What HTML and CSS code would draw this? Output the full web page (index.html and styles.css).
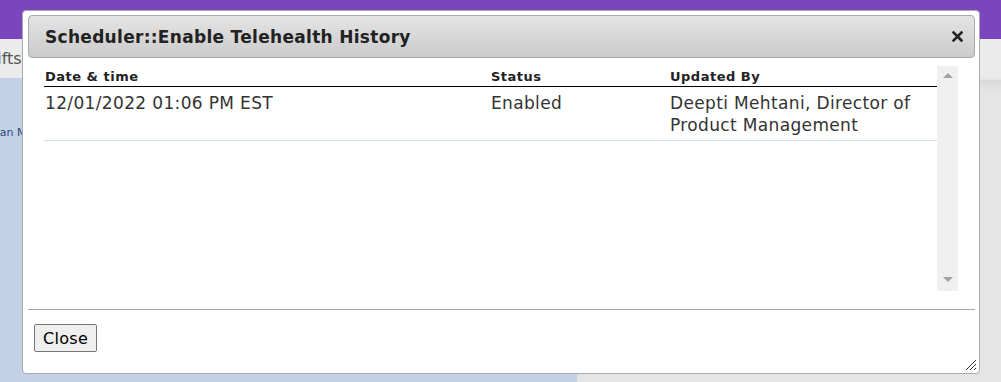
FILE: index.html
```html
<!DOCTYPE html>
<html lang="en">
  <head>
    <meta charset="utf-8" />
    <title>Scheduler</title>
    <link rel="stylesheet" href="styles.css">
  </head>
  <body>
    <div class="topbar"></div>
    <div class="subnav"><span class="subnav-item">Shifts</span></div>
    <div class="main">
      <div class="main-left"><span class="side-link">Plan Ma</span></div>
      <div class="main-right"></div>
    </div>

    <!-- History dialog -->
    <div class="dialog">
      <div class="dialog-title">
        <span class="dialog-title-text">Scheduler::Enable Telehealth History</span>
        <svg class="dialog-close" width="11" height="11" viewBox="0 0 11 11">
          <path d="M1.5 1.5 L9.5 9.5 M9.5 1.5 L1.5 9.5" stroke="#222" stroke-width="2.6" stroke-linecap="square" />
        </svg>
      </div>
      <div class="dialog-body">
        <div class="history">
          <div class="history-row history-head">
            <div class="col-date">Date &amp; time</div>
            <div class="col-status">Status</div>
            <div class="col-user">Updated By</div>
          </div>
          <div class="history-row history-item">
            <div class="col-date">12/01/2022 01:06 PM EST</div>
            <div class="col-status">Enabled</div>
            <div class="col-user">Deepti Mehtani, Director of Product Management</div>
          </div>
        </div>
        <div class="scrollbar">
          <span class="arrow-up"></span>
          <span class="arrow-down"></span>
        </div>
      </div>
      <div class="dialog-footer">
        <button class="btn">Close</button>
      </div>
      <svg class="resize-grip" width="12" height="12" viewBox="0 0 12 12">
        <path d="M11 1 L1 11 M11 5 L5 11 M11 9 L9 11" stroke="#333" stroke-width="1" />
      </svg>
    </div>
  </body>
</html>
```

FILE: styles.css
```css
body {
  margin: 0;
  font-family: "DejaVu Sans", Verdana, sans-serif;
  background: #e5e5e5;
  height: 382px;
  overflow: hidden;
}

.topbar {
  height: 39px;
  background: #7b45be;
}

.subnav {
  height: 39px;
  background: #ebebeb;
  display: flex;
  align-items: center;
}

.subnav-item {
  margin-left: -23px;
  font-size: 16px;
  color: #555;
}

.main {
  display: flex;
  height: 304px;
}

.main-left {
  width: 577px;
  background: #c3d1e6;
  padding-top: 43px;
  box-sizing: border-box;
}

.side-link {
  margin-left: -10px;
  font-size: 11px;
  color: #2b4a7a;
}

.main-right {
  flex: 1;
  background: linear-gradient(#d8d8d8, #e5e5e5 12px);
  margin-top: 2px;
}

/* dialog */
.dialog {
  position: absolute;
  left: 22px;
  top: 10px;
  width: 958px;
  height: 364px;
  box-sizing: border-box;
  padding: 4px 4px 0 5px;
  background: #fff;
  border: 1px solid #aaa;
  border-radius: 4px;
  color: #333;
}

.dialog-title {
  height: 43px;
  box-sizing: border-box;
  display: flex;
  align-items: center;
  justify-content: space-between;
  padding: 0 11px 0 16px;
  border: 1px solid #aaa;
  border-radius: 4px;
  background: linear-gradient(#e4e4e4, #cbcbcb);
}

.dialog-title-text {
  font-size: 17px;
  font-weight: bold;
  letter-spacing: 0.3px;
  color: #222;
}

.dialog-body {
  display: flex;
  height: 225px;
  margin: 8px 17px 0 16px;
}

.history {
  flex: 1;
}

.history-row {
  display: flex;
}

.col-date {
  width: 446px;
}

.col-status {
  width: 179px;
}

.col-user {
  flex: 1;
}

.history-head {
  font-size: 13px;
  font-weight: bold;
  letter-spacing: 0.5px;
  line-height: 15px;
  padding: 3px 0 2px 1px;
  border-bottom: 1px solid #000;
  color: #222;
}

.history-item {
  font-size: 17px;
  letter-spacing: 0.35px;
  line-height: 22px;
  padding: 5px 0 4px 1px;
  border-bottom: 1px solid #cfe1f7;
}

.scrollbar {
  width: 21px;
  background: #f0f0f0;
  display: flex;
  flex-direction: column;
  justify-content: space-between;
  align-items: center;
  padding: 7px 0 9px;
  box-sizing: border-box;
}

.arrow-up,
.arrow-down {
  width: 0;
  height: 0;
  border-left: 5px solid transparent;
  border-right: 5px solid transparent;
}

.arrow-up {
  border-bottom: 5px solid #a3a3a3;
}

.arrow-down {
  border-top: 5px solid #a3a3a3;
}

.dialog-footer {
  margin-top: 18px;
  border-top: 1px solid #aaa;
  padding: 14px 6px;
}

.btn {
  font-family: "DejaVu Sans", Verdana, sans-serif;
  font-size: 16px;
  letter-spacing: 0.3px;
  color: #000;
  background: #efefef;
  border: 1px solid #767676;
  border-radius: 2px;
  height: 28px;
  padding: 0 8px;
}

.resize-grip {
  position: absolute;
  right: 2px;
  bottom: 2px;
}
```
